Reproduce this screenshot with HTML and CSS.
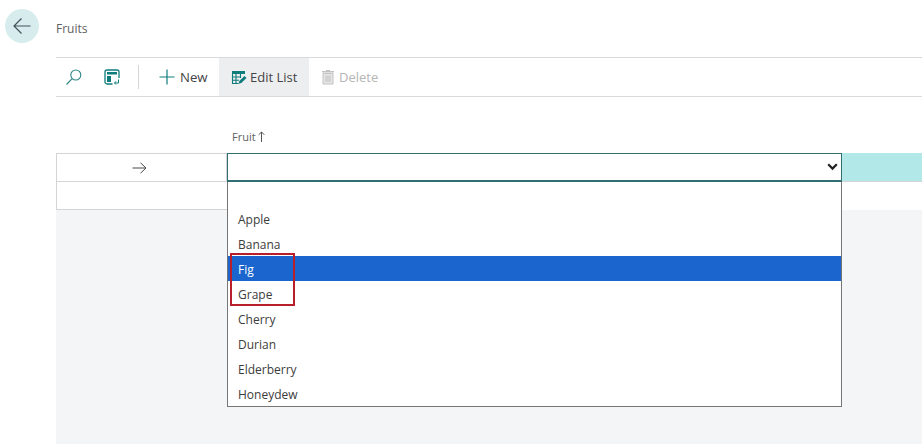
FILE: index.html
```html
<!DOCTYPE html>
<html lang="en">
<head>
<meta charset="utf-8">
<title>Fruits</title>
<link rel="stylesheet" href="styles.css">
</head>
<body>
<div class="page">
  <aside class="rail">
    <button class="back" aria-label="Back">
      <svg width="20" height="20" viewBox="0 0 20 20"><path d="M18.500 10H2M9.500 2.500 2 10l7.500 7.500" fill="none" stroke="#42545a" stroke-width="1.200"/></svg>
    </button>
  </aside>
  <main class="content">
    <header class="title">Fruits</header>
    <nav class="toolbar">
      <span class="tool tool-icon tool-search">
        <svg width="18" height="18" viewBox="0 0 18 18"><circle cx="10.800" cy="7" r="5" fill="none" stroke="#2f8585" stroke-width="1.100"/><path d="M7.200 10.600 1.500 16.500" fill="none" stroke="#2f8585" stroke-width="1.100"/></svg>
      </span>
      <span class="tool tool-icon tool-layout">
        <svg width="16" height="16" viewBox="0 0 16 16"><path d="M8.500 15H3a2 2 0 0 1-2-2V3a2 2 0 0 1 2-2h10a2 2 0 0 1 2 2v6" fill="none" stroke="#0f7c7c" stroke-width="1.300"/><path d="M3 3h10v2.500H3zM3 7h4v6H3z" fill="#0f7c7c"/><path d="M10.500 14h4v-3.500M12 12.300 10.500 14l1.500 1.500" fill="none" stroke="#0f7c7c" stroke-width="1"/></svg>
      </span>
      <span class="divider"></span>
      <span class="tool tool-new">
        <svg width="16" height="16" viewBox="0 0 16 16"><path d="M8 .5v15M.5 8h15" fill="none" stroke="#0f7c7c" stroke-width="1.200"/></svg>
        New
      </span>
      <span class="tool tool-edit">
        <svg width="16" height="15" viewBox="0 0 16 15"><path d="M1 1h13v3H1z" fill="#0f7c7c"/><path d="M1.500 4v9.500h6M1 7h9M1 10.200h7M5 4v9M9.500 4v4" fill="none" stroke="#0f7c7c" stroke-width="1.100"/><path d="M7.500 13.800 8.300 11 13.500 6l2 2-5.200 5z" fill="#0f7c7c"/></svg>
        Edit List
      </span>
      <span class="tool tool-delete">
        <svg width="14" height="16" viewBox="0 0 14 16"><path d="M5 2V1h4v1h4v1.500H1V2z" fill="#c2c2c2"/><path d="M2 4.500h10V15H2z" fill="#e6e6e6" stroke="#c2c2c2"/><path d="M5 6.500V13M7 6.500V13M9 6.500V13" stroke="#bdbdbd" fill="none"/></svg>
        Delete
      </span>
    </nav>
    <div class="col-head">
      <span class="col-spacer"></span>
      <span class="col-label">Fruit
        <svg class="sort" width="7" height="11" viewBox="0 0 7 11"><path d="M3.500 11V1M.7 3.800 3.500 1l2.800 2.800" fill="none" stroke="#555" stroke-width="1"/></svg>
      </span>
    </div>
    <section class="grid">
      <div class="row row-active">
        <div class="cell-marker">
          <svg width="15" height="12" viewBox="0 0 15 12"><path d="M.5 6H14M8.500.8 14 6l-5.500 5.200" fill="none" stroke="#4b4b4b" stroke-width="1"/></svg>
        </div>
        <div class="cell-select">
          <svg width="11" height="8" viewBox="0 0 11 8"><path d="M1.200 1.300 5.500 5.600 9.800 1.300" fill="none" stroke="#222" stroke-width="2.200"/></svg>
        </div>
        <div class="cell-fill"></div>
      </div>
      <div class="row row-empty"></div>
      <div class="gray"></div>
      <ul class="dropdown">
        <li class="option option-blank"></li>
        <li class="option">Apple</li>
        <li class="option">Banana</li>
        <li class="option selected">Fig</li>
        <li class="option">Grape</li>
        <li class="option">Cherry</li>
        <li class="option">Durian</li>
        <li class="option">Elderberry</li>
        <li class="option">Honeydew</li>
      </ul>
      <div class="highlight"></div>
    </section>
  </main>
</div>
</body>
</html>
```

FILE: styles.css
```css
* { box-sizing: border-box; }
html, body { margin: 0; height: 100%; overflow: hidden; background: #fff; }
body { font-family: "Open Sans", "Noto Sans", sans-serif; color: #333; }
.page { display: flex; height: 444px; width: 922px; }
.rail { width: 56px; flex: none; padding: 9px 0 0 5px; }
.back { width: 34px; height: 34px; border: 0; padding: 0; border-radius: 50%; background: #d7eced; display: flex; align-items: center; justify-content: center; }
.content { flex: 1; display: flex; flex-direction: column; min-width: 0; }
.title { height: 57px; padding-top: 20px; font-size: 12px; line-height: 17px; color: #616161; }
.toolbar { height: 40px; flex: none; border-top: 1px solid #d9d9d9; border-bottom: 1px solid #d9d9d9; display: flex; align-items: stretch; font-size: 13px; color: #444; }
.tool { display: flex; align-items: center; }
.tool-search { margin-left: 9px; width: 18px; }
.tool-layout { margin-left: 21px; width: 16px; }
.divider { width: 1px; height: 24px; background: #d4d4d4; align-self: center; margin: 0 20px 0 18px; }
.tool-new { gap: 5px; width: 60px; font-size: 13.200px; }
.tool-edit { width: 90px; padding-left: 12px; gap: 3px; background: #edeef0; }
.tool-delete { padding-left: 12px; gap: 4px; color: #b5b5b5; }
.col-head { height: 56px; flex: none; display: flex; align-items: flex-end; font-size: 11px; color: #616161; padding-bottom: 9px; }
.col-spacer { width: 176px; }
.col-label { line-height: 14px; }
.sort { vertical-align: -1px; }
.grid { flex: 1; position: relative; display: flex; flex-direction: column; }
.row { height: 28px; flex: none; display: flex; }
.row-active { height: 29px; border-top: 1px solid #d4d4d4; border-bottom: 1px solid #d4d4d4; }
.row-empty { background: #fff; border-bottom: 1px solid #d4d4d4; border-left: 1px solid #d4d4d4; width: 172px; }
.cell-marker { width: 171px; flex: none; border-left: 1px solid #d4d4d4; border-right: 1px solid #d4d4d4; display: flex; align-items: center; justify-content: center; padding-right: 5px; }
.cell-select { width: 615px; flex: none; margin: -1px 0; border: 1px solid #2f6f72; border-bottom-width: 2px; display: flex; align-items: center; justify-content: flex-end; padding-right: 3px; background: #fff; }
.cell-fill { flex: 1; background: #b3e8e8; margin-top: -1px; }
.gray { flex: 1; background: #f3f5f6; }
.dropdown { position: absolute; left: 171px; top: 29px; width: 615px; height: 225px; margin: 0; padding: 0; list-style: none; background: #fff; border: 1px solid #767676; border-top: 0; font-size: 12px; color: #3c3c3c; }
.option { height: 25px; line-height: 27px; padding-left: 10px; }
.option-blank { height: 24px; }
.selected { background: #1a65ce; color: #fff; }
.highlight { position: absolute; left: 174px; top: 100px; width: 65px; height: 53px; border: 2px solid #b81f2a; }
```
